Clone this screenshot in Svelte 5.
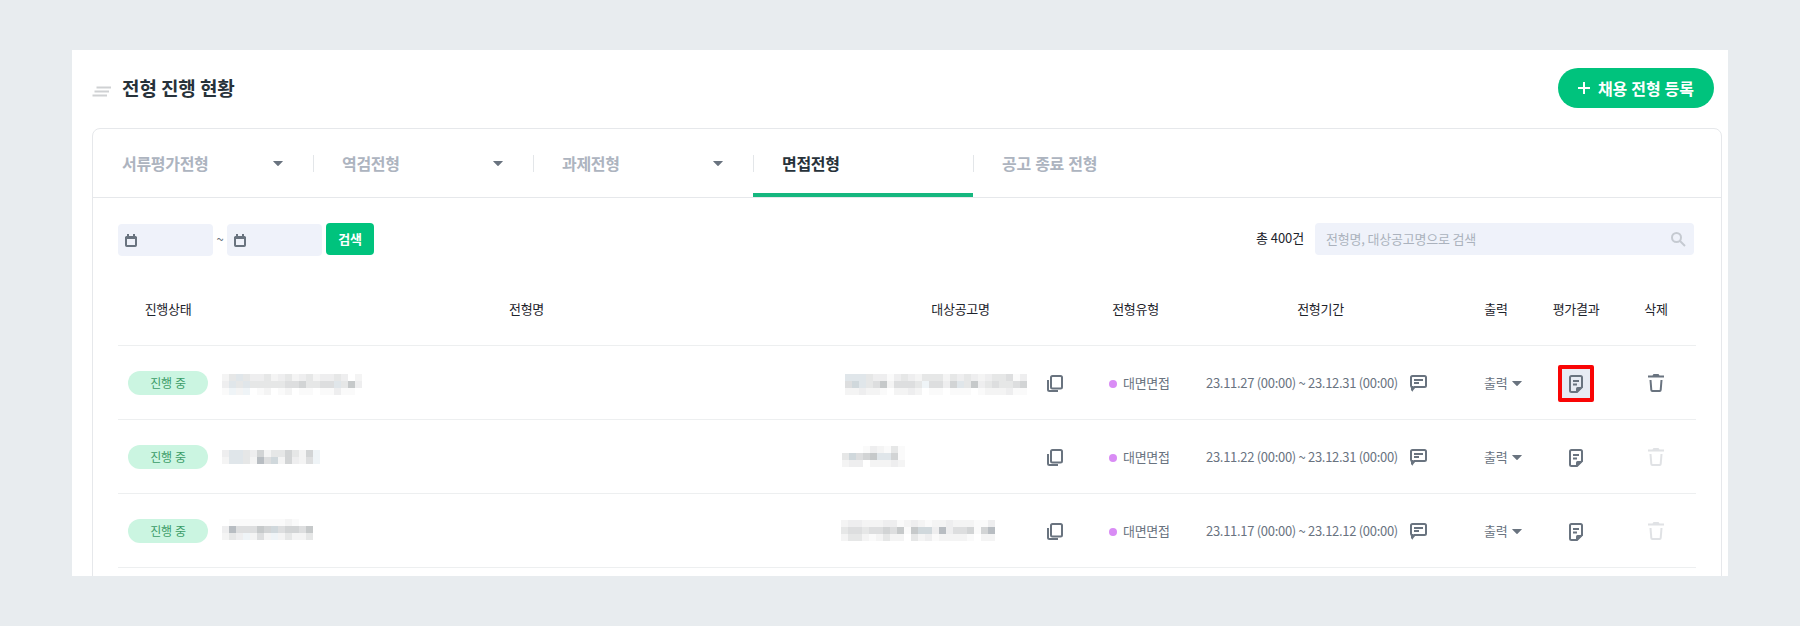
<script lang="ts">
  type Mosaic = { x: number; y: number; cells: string[] }
  type Row = { name: Mosaic; target: Mosaic; period: string; selected: boolean; deletable: boolean }

  const CELL = 7

  const shades: Record<string, string> = {
    a: '#fafafa',
    b: '#f4f4f4',
    c: '#eeeeef',
    d: '#e6e7e7',
    e: '#dddedf',
    f: '#d2d4d5',
    g: '#c6c9ca',
    h: '#b8bdc2',
    p: '#eff4f7',
    q: '#e0e6ea',
    r: '#d0d8dc',
  }

  const tabs = [
    { label: '서류평가전형', menu: true },
    { label: '역검전형', menu: true },
    { label: '과제전형', menu: true },
    { label: '면접전형', menu: false },
    { label: '공고 종료 전형', menu: false },
  ]

  const columns = ['진행상태', '전형명', '대상공고명', '전형유형', '전형기간', '출력', '평가결과', '삭제']

  const rows: Row[] = [
    {
      name: { x: 4, y: 28, cells: ['bdqdccdbcdbcdbccdc.b', 'cqdqdddddeefddeeqdgc', 'apbp.ab.ab.aa.aacaa.'] },
      target: {
        x: 10,
        y: 28,
        cells: ['qqqdccacdcbdddbdcdcbcddeac', 'erqdegbeeedpeecfqdgcdeddef', 'bbcbba.bbcb.aa.aaa.abbbcaa'],
      },
      period: '23.11.27 (00:00) ~ 23.12.31 (00:00)',
      selected: true,
      deletable: true,
    },
    {
      name: { x: 4, y: 30, cells: ['cqqdcfbddfdbfp', 'bqqdbherbfcbep'] },
      target: { x: 7, y: 26, cells: ['...acbada', 'drefgqqfa', 'bcc.bbbcb'] },
      period: '23.11.22 (00:00) ~ 23.12.31 (00:00)',
      selected: false,
      deletable: false,
    },
    {
      name: { x: 4, y: 25, cells: ['.aaaaaaaaba..', 'cheeegfreffeg', 'bdcpbebpbdbbd'] },
      target: { x: 6, y: 26, cells: ['bccbbbccabcbabbcbbbaac', 'deedeefegagrrchceefafh', 'bddbabdbb.dbcabbbba.bb'] },
      period: '23.11.17 (00:00) ~ 23.12.12 (00:00)',
      selected: false,
      deletable: false,
    },
  ]

  let active = $state('면접전형')
</script>

{#snippet caret()}
  <svg class="caret" width="10" height="5" viewBox="0 0 10 5"><path d="M.6 0h8.8q.8 0 .3.6L5.5 4.7q-.5.5-1 0L.3.6Q-.2 0 .6 0z" /></svg>
{/snippet}

{#snippet calendar()}
  <svg class="calendar" width="12" height="14" viewBox="0 0 12 14">
    <path class="line" d="M1 4h10v7.2q0 .8-.8.8H1.800q-.8 0-.8-.8z" />
    <path class="solid" d="M2 0h2v2h4V0h2v2h.5q1.500 0 1.500 1.500V5H0V3.500Q0 2 1.500 2H2z" />
  </svg>
{/snippet}

{#snippet mosaic(m: Mosaic)}
  <svg
    class="mosaic"
    width={m.cells[0].length * CELL}
    height={m.cells.length * CELL}
    style="margin: {m.y}px 0 0 {m.x}px"
    shape-rendering="crispEdges"
  >
    {#each m.cells as line, j}
      {#each line as c, i}
        {#if c !== '.'}
          <rect x={i * CELL} y={j * CELL} width={CELL} height={CELL} fill={shades[c]} />
        {/if}
      {/each}
    {/each}
  </svg>
{/snippet}

<main class="page">
  <section class="panel">
    <header class="head">
      <svg class="head-mark" width="20" height="12" viewBox="0 0 20 12">
        <path d="M4.500 1.500h14.500M2.500 5.500h14.500M.5 9.500h14.500" />
      </svg>
      <h1>전형 진행 현황</h1>
      <button class="create">
        <svg width="12" height="12" viewBox="0 0 12 12"><path d="M6 0v12M0 6h12" /></svg>
        채용 전형 등록
      </button>
    </header>

    <div class="card">
      <nav class="tabs">
        {#each tabs as tab (tab.label)}
          <button class="tab" class:active={tab.label === active} onclick={() => { active = tab.label }}>
            <span>{tab.label}</span>
            {#if tab.menu}{@render caret()}{/if}
          </button>
        {/each}
      </nav>

      <div class="filters">
        <div class="date">{@render calendar()}</div>
        <span class="tilde">~</span>
        <div class="date">{@render calendar()}</div>
        <button class="submit">검색</button>
        <span class="total">총 400건</span>
        <div class="search">
          <input placeholder="전형명, 대상공고명으로 검색" />
          <svg width="15" height="15" viewBox="0 0 15 15">
            <circle cx="5.500" cy="5.500" r="4.500" />
            <path d="M9 9l5 5" />
          </svg>
        </div>
      </div>

      <div class="table">
        <div class="row thead">
          {#each columns as col (col)}
            <div>{col}</div>
          {/each}
        </div>

        {#each rows as row (row.period)}
          <div class="row">
            <div class="center"><span class="badge">진행 중</span></div>
            <div class="masked">{@render mosaic(row.name)}</div>
            <div class="masked">
              {@render mosaic(row.target)}
              <svg class="copy" width="16" height="18" viewBox="0 0 16 18">
                <rect x="4" y="1" width="11" height="12.500" rx="1.500" />
                <path d="M1 5v9.500Q1 16 2.500 16H11" />
              </svg>
            </div>
            <div class="kind"><i class="dot"></i>대면면접</div>
            <div class="period">
              <span>{row.period}</span>
              <svg class="memo" width="17" height="17" viewBox="0 0 17 17">
                <path class="line" d="M2.500 1h12Q16 1 16 2.500v8Q16 12 14.500 12H4.500L2 14V12Q1 12 1 10.500v-8Q1 1 2.500 1z" />
                <path class="solid" d="M2 11.500h4L2 17z" />
                <path class="line" d="M4 5h9M4 8h5" />
              </svg>
            </div>
            <div class="print">출력{@render caret()}</div>
            <div class="center">
              <button class="result" class:selected={row.selected} title="평가결과">
                <svg width="14" height="18" viewBox="0 0 14 18">
                  <path class="line" d="M2.500 1h9Q13 1 13 2.500V12l-5 5H2.500Q1 17 1 15.500v-13Q1 1 2.500 1z" />
                  <path class="solid" d="M7 18v-4.500Q7 12 8.500 12H14z" />
                  <path class="line" d="M4 6h6M4 9.500h4" />
                </svg>
              </button>
            </div>
            <div class="center">
              <svg class="trash" class:off={!row.deletable} width="16" height="18" viewBox="0 0 16 18">
                <path class="solid" d="M0 1.500h4.500L5.500 0h5l1 1.500H16v2H0z" />
                <path class="line" d="M2.500 6l.8 10q.1 1 1 1h7.400q.9 0 1-1l.8-10" />
              </svg>
            </div>
          </div>
        {/each}
      </div>
    </div>
  </section>
</main>

<style>
  :global(body) {
    margin: 0;
    background: #e8ecef;
  }

  .page {
    box-sizing: border-box;
    height: 626px;
    padding: 50px 72px;
    background: #e8ecef;
    color: #27323a;
    font-family: 'Noto Sans CJK KR', 'Noto Sans', sans-serif;
    font-size: 13px;
    letter-spacing: -0.3px;
  }

  button {
    padding: 0;
    border: none;
    background: none;
    font: inherit;
    letter-spacing: inherit;
    cursor: pointer;
  }

  svg {
    display: block;
    flex-shrink: 0;
    fill: none;
  }

  .line {
    stroke: #69737f;
    stroke-width: 2;
  }

  .solid,
  .caret {
    fill: #69737f;
  }

  .panel {
    box-sizing: border-box;
    height: 526px;
    padding: 18px 6px 0 20px;
    overflow: hidden;
    background: #fff;
  }

  .head {
    display: flex;
    align-items: center;
    height: 40px;
    padding-right: 8px;
    margin-bottom: 20px;
  }

  .head-mark {
    margin-top: 7px;
    stroke: #cfd1d3;
    stroke-width: 2;
  }

  h1 {
    margin: 0 auto 0 10px;
    font-size: 19px;
    font-weight: 700;
    line-height: 28px;
    letter-spacing: -0.1px;
  }

  .create {
    display: flex;
    align-items: center;
    gap: 8px;
    width: 156px;
    height: 40px;
    padding-left: 20px;
    border-radius: 20px;
    background: #00c37d;
    color: #fff;
    font-size: 16px;
    font-weight: 700;
    letter-spacing: -0.1px;
    word-spacing: 0.5px;
    white-space: nowrap;
  }

  .create svg {
    stroke: #fff;
    stroke-width: 2;
  }

  .card {
    box-sizing: border-box;
    height: 600px;
    border: 1px solid #e6e8eb;
    border-radius: 8px;
  }

  .tabs {
    display: flex;
    height: 68px;
    border-bottom: 1px solid #e6e8eb;
  }

  .tab {
    position: relative;
    display: flex;
    align-items: center;
    justify-content: space-between;
    box-sizing: border-box;
    width: 220px;
    padding: 0 30px 0 29px;
    color: #adb4bf;
    font-size: 16px;
    font-weight: 700;
    word-spacing: 1px;
  }

  .tab + .tab::before {
    content: '';
    position: absolute;
    left: 0;
    top: 26px;
    width: 1px;
    height: 17px;
    background: #e3e6e9;
  }

  .tab.active {
    color: #27323a;
  }

  .tab.active::after {
    content: '';
    position: absolute;
    left: 0;
    right: 0;
    bottom: 0;
    height: 4px;
    background: #16b77f;
  }

  .filters {
    display: flex;
    align-items: center;
    height: 32px;
    padding: 25px 27px 0 25px;
  }

  .date {
    display: flex;
    align-items: center;
    box-sizing: border-box;
    width: 95px;
    height: 32px;
    margin-top: 2px;
    padding: 1px 0 0 7px;
    border-radius: 4px;
    background: #eff2fa;
  }

  .tilde {
    width: 14px;
    padding-bottom: 2px;
    text-align: center;
    color: #69737f;
  }

  .submit {
    width: 48px;
    height: 32px;
    margin-left: 4px;
    padding-bottom: 2px;
    border-radius: 4px;
    background: #00c37d;
    color: #fff;
    font-weight: 700;
  }

  .total {
    margin-left: auto;
    padding-bottom: 3px;
    color: #1d232b;
    letter-spacing: -0.1px;
  }

  .search {
    display: flex;
    align-items: center;
    box-sizing: border-box;
    width: 379px;
    height: 32px;
    margin-left: 11px;
    padding: 0 8px 0 11px;
    border-radius: 4px;
    background: #eff2fa;
  }

  .search input {
    flex: 1;
    min-width: 0;
    padding: 0 0 2px;
    border: none;
    outline: none;
    background: none;
    font: inherit;
    letter-spacing: -0.2px;
  }

  .search input::placeholder {
    color: #abb2bd;
  }

  .search svg {
    stroke: #c5cad1;
    stroke-width: 2;
  }

  .table {
    padding: 17px 25px 0;
  }

  .row {
    display: grid;
    grid-template-columns: 100px 617px 251px 99px 271px 80px 80px 80px;
    box-sizing: border-box;
    height: 74px;
    border-bottom: 1px solid #edeff0;
    color: #69737f;
  }

  .thead {
    align-items: center;
    padding-bottom: 1px;
    color: #1d232b;
    text-align: center;
  }

  .center {
    display: flex;
    align-items: center;
    justify-content: center;
  }

  .badge {
    width: 80px;
    border-radius: 12px;
    background: #cbf5e1;
    color: #3b9c68;
    font-size: 12px;
    line-height: 24px;
    text-align: center;
    word-spacing: 1px;
  }

  .masked {
    display: flex;
    align-items: flex-start;
  }

  .copy {
    margin: 29px 23px 0 auto;
    stroke: #69737f;
    stroke-width: 2;
  }

  .kind,
  .period,
  .print {
    display: flex;
    align-items: center;
  }

  .kind {
    padding-left: 23px;
  }

  .dot {
    width: 8px;
    height: 8px;
    margin: 2px 6px 0 0;
    border-radius: 50%;
    background: #d98cf5;
  }

  .period {
    padding-left: 21px;
    white-space: nowrap;
  }

  .period span {
    width: 204px;
    letter-spacing: -0.3px;
  }

  .memo {
    margin-top: 2px;
  }

  .print {
    padding-left: 28px;
  }

  .print .caret {
    margin: 1px 0 0 5px;
  }

  .result {
    display: flex;
    align-items: center;
    justify-content: center;
    box-sizing: border-box;
    width: 36px;
    height: 37px;
    margin-top: 2px;
  }

  .result.selected {
    border: 4px solid #f90505;
    border-radius: 2px;
    background: #e7ebf3;
  }

  .trash {
    margin-top: 1px;
  }

  .trash.off {
    opacity: 0.2;
  }
</style>
